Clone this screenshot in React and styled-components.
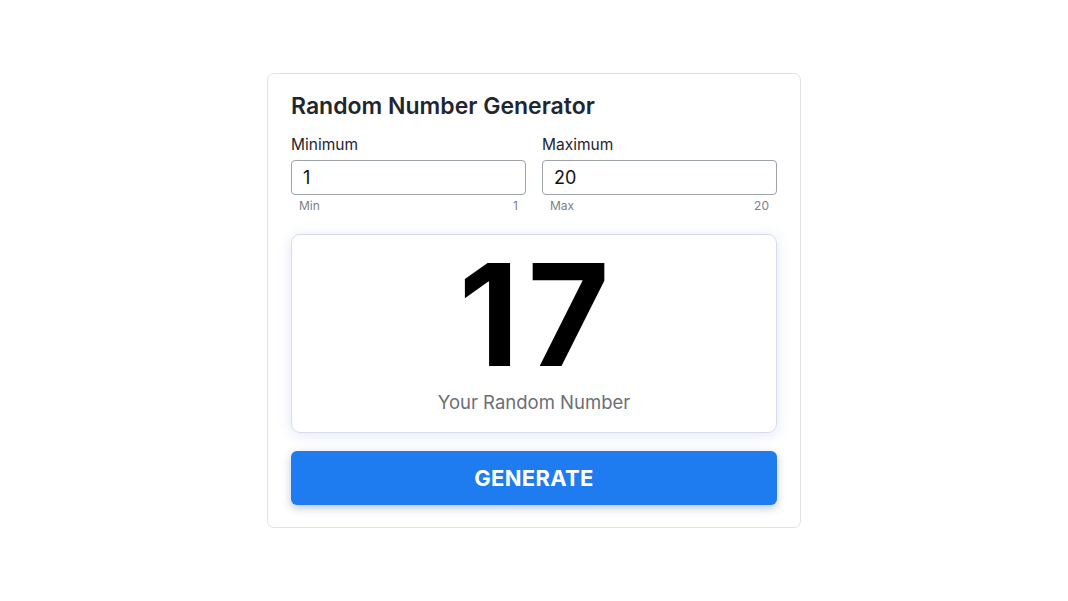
import React, { useState } from 'react'
import styled, { createGlobalStyle } from 'styled-components'

const GlobalStyle = createGlobalStyle`
  html, body {
    margin: 0;
    padding: 0;
    background: #ffffff;
    font-family: Inter, "Noto Sans", sans-serif;
  }
  #root {
    min-height: 100vh;
  }
`

const Page = styled.div`
  width: 100%;
  height: 100vh;
  display: flex;
  align-items: center;
  justify-content: center;
`

const Card = styled.div`
  width: 534px;
  box-sizing: border-box;
  padding: 17px 23px 22px 23px;
  border: 1px solid #dfe2e7;
  border-radius: 7px;
  background: #fff;
`

const Title = styled.h2`
  margin: 0;
  font-size: 23px;
  line-height: 30px;
  font-weight: 600;
  color: #1f2630;
`

const Fields = styled.div`
  display: grid;
  grid-template-columns: minmax(0, 1fr) minmax(0, 1fr);
  gap: 16px;
  margin-top: 14px;
`

const Field = styled.div`
  display: flex;
  flex-direction: column;
  min-width: 0;
`

const Label = styled.label`
  font-size: 15.5px;
  line-height: 20px;
  color: #1f2630;
  margin-bottom: 5px;
`

const Input = styled.input`
  width: 100%;
  height: 35px;
  box-sizing: border-box;
  border: 1px solid #9ea3aa;
  border-radius: 4px;
  padding: 0 11px;
  font-family: inherit;
  font-size: 18px;
  color: #111;
  outline: none;
`

const Helper = styled.div`
  display: flex;
  justify-content: space-between;
  padding: 0 8px;
  margin-top: 3px;
  font-size: 12px;
  line-height: 16px;
  color: #7a7f86;
`

const Result = styled.div`
  margin-top: 20px;
  height: 199px;
  box-sizing: border-box;
  border: 1px solid #d7dde8;
  border-radius: 9px;
  box-shadow: 0 2px 14px rgba(120, 145, 210, 0.22);
  display: flex;
  flex-direction: column;
  align-items: center;
  padding-top: 9px;
`

const Number = styled.div`
  font-size: 141px;
  line-height: 141px;
  font-weight: 700;
  color: #000;
  letter-spacing: 8px;
  padding-left: 8px;
`

const Caption = styled.div`
  margin-top: 5px;
  font-size: 18.5px;
  line-height: 24px;
  color: #6b6f75;
`

const Button = styled.button`
  width: 100%;
  margin-top: 18px;
  height: 54px;
  border: none;
  border-radius: 6px;
  background: #1f7cf0;
  color: #fff;
  font-family: inherit;
  font-size: 22px;
  font-weight: 700;
  letter-spacing: 0.3px;
  cursor: pointer;
  box-shadow: 0 3px 8px rgba(30, 60, 120, 0.3);
`

export default function App() {
  const [min, setMin] = useState('1')
  const [max, setMax] = useState('20')
  const [value, setValue] = useState(17)

  const generate = () => {
    const lo = parseInt(min, 10) || 0
    const hi = parseInt(max, 10) || 0
    setValue(Math.floor(Math.random() * (hi - lo + 1)) + lo)
  }

  return (
    <Page>
      <GlobalStyle />
      <Card>
        <Title>Random Number Generator</Title>
        <Fields>
          <Field>
            <Label>Minimum</Label>
            <Input value={min} onChange={e => setMin(e.target.value)} />
            <Helper>
              <span>Min</span>
              <span>1</span>
            </Helper>
          </Field>
          <Field>
            <Label>Maximum</Label>
            <Input value={max} onChange={e => setMax(e.target.value)} />
            <Helper>
              <span>Max</span>
              <span>20</span>
            </Helper>
          </Field>
        </Fields>
        <Result>
          <Number>{value}</Number>
          <Caption>Your Random Number</Caption>
        </Result>
        <Button onClick={generate}>GENERATE</Button>
      </Card>
    </Page>
  )
}
